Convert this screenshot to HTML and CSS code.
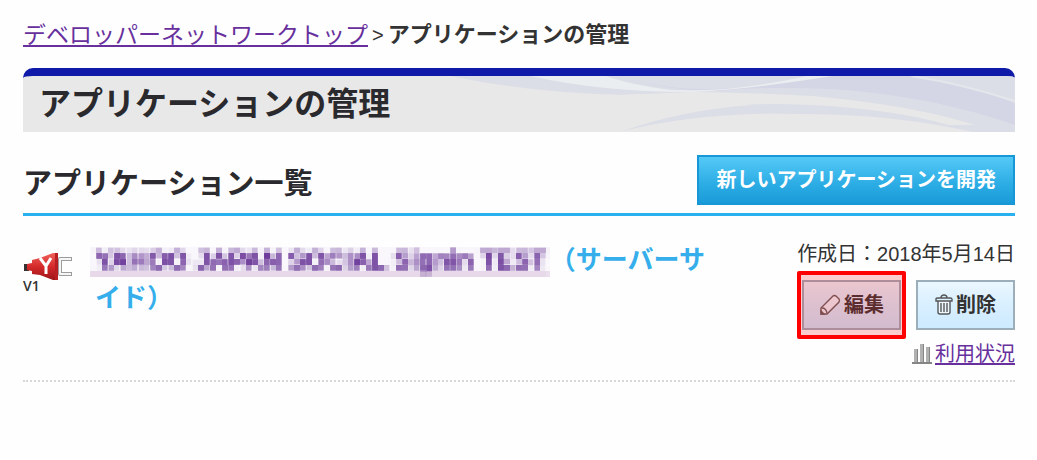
FILE: index.html
```html
<!DOCTYPE html>
<html lang="ja">
<head>
<meta charset="utf-8">
<meta name="viewport" content="width=device-width, initial-scale=1">
<title>アプリケーションの管理</title>
<link rel="stylesheet" href="styles.css">
</head>
<body>
<svg class="filters" aria-hidden="true">
  <filter id="mosaic" x="0" y="0" width="100%" height="100%" color-interpolation-filters="sRGB">
    <feGaussianBlur in="SourceGraphic" stdDeviation="1.4" result="soft"/>
    <feFlood x="2" y="2" width="2" height="2" flood-color="#000"/>
    <feComposite x="0" y="0" width="6" height="6"/>
    <feTile result="grid"/>
    <feComposite in="soft" in2="grid" operator="in"/>
    <feMorphology operator="dilate" radius="2"/>
  </filter>
</svg>
<nav class="breadcrumb" aria-label="パンくずリスト">
  <a href="#">デベロッパーネットワークトップ</a>
  <span class="separator">&gt;</span>
  <strong>アプリケーションの管理</strong>
</nav>
<main>
  <header class="banner">
    <svg class="waves" viewBox="0 0 632 56" preserveAspectRatio="none" aria-hidden="true">
      <path fill="#dcdee7" d="M70 0H632V56H590Q510 38 420 38Q320 35 239 56Q300 34 370 29Q300 15 240 19Q150 17 70 0Z"/>
      <path fill="#e8e8e8" d="M240 19L310 16Q380 17 430 20Q530 29 592 49H566Q500 30 400 28Q310 27 239 56H180V19Z"/>
      <path fill="#e8e8e8" d="M239 56Q310 38 390 39Q440 41 483 56Z"/>
      <path fill="#d5d6e5" d="M235 0Q290 18 370 11Q410 5 430 0H530Q590 11 632 27V49Q550 20 450 13Q380 10 340 15Q275 14 235 0Z"/>
      <path fill="#ebeef0" d="M150 0Q220 16 310 16Q370 13 450 0H425Q350 17 290 14Q250 9 225 0Z"/>
      <path fill="none" stroke="#e3e7eb" stroke-width="2" d="M529 0Q580 8 632 25"/>
    </svg>
    <h1>アプリケーションの管理</h1>
  </header>
  <section>
    <div class="section-head">
      <h2>アプリケーション一覧</h2>
      <button class="create" type="button">新しいアプリケーションを開発</button>
    </div>
    <article class="app">
      <div class="app-icon">
        <svg width="50" height="30" viewBox="0 0 50 30" aria-hidden="true">
          <defs><linearGradient id="plug" x2="0" y2="1"><stop stop-color="#ef625c"/><stop offset=".5" stop-color="#d52a2b"/><stop offset="1" stop-color="#9d1519"/></linearGradient></defs>
          <path fill="none" stroke="#9c9c9c" stroke-width="4" stroke-linejoin="round" d="M49 7H37V22H49"/>
          <path fill="none" stroke="#f5f5f5" stroke-width="2" stroke-linejoin="round" d="M48 7H37V22H48"/>
          <path fill="#363232" d="M1 12H6V19H1Z"/>
          <path fill="url(#plug)" d="M4 12L9 11V8L17 6L30 1H35V28H30L17 23L9 22V19L4 18Z"/>
          <path fill="#b71f23" d="M32 1H35V28H32Z"/>
          <path fill="none" stroke="#fff" stroke-width="3" d="M17 6L23 14V22M28 6L23 14"/>
        </svg>
        <span>V1</span>
      </div>
      <h3><a class="app-name" href="#">YAHOO JAPAN SOCIAL Signin TEST</a>（サーバーサイド）</h3>
      <div class="app-tools">
        <p>作成日：2018年5月14日</p>
        <div class="buttons">
          <button class="tool edit" type="button">
            <svg width="22" height="22" viewBox="0 0 22 22" fill="none" stroke="#635d5d" stroke-width="1.4" aria-hidden="true"><path fill="#fff" fill-opacity=".5" d="M2 14L14 2Q15 1 17 2L20 5Q21 6 20 8L8 20L2 20Z"/><path d="M3 14Q7 14 8 19"/><path fill="#635d5d" d="M2 17L5 20H2Z"/></svg>編集
          </button>
          <button class="tool" type="button">
            <svg width="18" height="22" viewBox="0 0 18 22" fill="none" stroke="#56585a" stroke-width="1.4" aria-hidden="true"><path fill="#fff" fill-opacity=".6" d="M3 7V18Q3 20 5 20H13Q15 20 15 18V7"/><path d="M1 7V5Q1 4 3 4H15Q17 4 17 5V7ZM6 4Q6 1 9 1Q12 1 12 4M6 9V18M9 9V18M12 9V18"/></svg>削除
          </button>
        </div>
        <div class="usage">
          <svg width="20" height="22" viewBox="0 0 20 22" aria-hidden="true"><path fill="#b1b1b1" d="M2 6H6V20H2ZM8 1H12V20H8ZM14 4H18V20H14Z"/><path fill="#858585" d="M5 6H6V20H5ZM11 1H12V20H11ZM17 4H18V20H17ZM0 19H20V21H0Z"/></svg>
          <a href="#">利用状況</a>
        </div>
      </div>
    </article>
  </section>
</main>
</body>
</html>
```
FILE: styles.css
```css
* { box-sizing: border-box; }
body {
  margin: 0;
  padding: 16px 22px 0 23px;
  background: #fefefe;
  color: #333;
  font: 20px/26px "Liberation Sans", "Noto Sans CJK JP", sans-serif;
}
h1, h2, h3, p { margin: 0; }
a { color: #67309d; text-decoration-skip-ink: none; text-underline-offset: 2px; }
button { font: inherit; font-weight: bold; }
.filters { position: absolute; width: 0; height: 0; }
.breadcrumb { display: flex; gap: 4px; margin-bottom: 14px; font-size: 23px; line-height: 38px; white-space: nowrap; }
.breadcrumb strong { font-size: 22px; }
.separator { font-size: 20px; }
.banner {
  position: relative;
  overflow: hidden;
  padding-left: 16px;
  border-top: 8px solid #101aa8;
  border-radius: 10px 10px 0 0;
  background: #e8e8e8;
}
.banner h1 { position: relative; font-size: 32px; line-height: 56px; color: #2a2a2e; }
.waves { position: absolute; top: 0; right: 0; width: 64%; height: 100%; }
.section-head {
  display: flex;
  justify-content: space-between;
  align-items: center;
  margin-top: 23px;
  padding-bottom: 8px;
  border-bottom: 3px solid #29b1ef;
}
.section-head h2 { font-size: 29px; line-height: 40px; padding-top: 8px; color: #2a2a2e; }
.create {
  height: 50px;
  padding: 0 17px;
  border: 2px solid #1797d6;
  background: linear-gradient(#54c9f7, #2cace4 60%, #1a9bd9);
  color: #fff;
  white-space: nowrap;
}
.app {
  display: grid;
  grid-template-columns: 50px minmax(0, 620px) auto;
  column-gap: 22px;
  padding: 25px 0 13px;
  border-bottom: 2px dotted #d8d8d8;
}
.app-icon { padding-top: 11px; font: 600 14px/14px "Open Sans", sans-serif; }
.app-icon svg, .app-icon span { display: block; }
.app-icon svg { margin-bottom: -3px; }
.app h3 { color: #35aeeb; font-size: 26px; line-height: 38px; }
.app-name {
  display: inline-block;
  height: 30px;
  margin-left: -5px;
  padding: 0 3px 0 5px;
  line-height: 26px;
  vertical-align: middle;
  color: #5d268f;
  background: linear-gradient(rgba(150, 110, 190, .05) 24px, #e6d8e8 24px);
  filter: url(#mosaic);
  text-decoration: none;
  white-space: nowrap;
}
.app-tools { display: flex; flex-direction: column; align-items: flex-end; margin-left: auto; white-space: nowrap; }
.buttons { display: flex; gap: 15px; margin: 13px 0 11px; }
.tool {
  position: relative;
  display: flex;
  align-items: center;
  justify-content: center;
  gap: 3px;
  height: 50px;
  min-width: 99px;
  padding: 0 14px;
  border: 2px solid #9baeba;
  background: linear-gradient(#ebf7ff, #d8efff 50%, #cdeaff);
  color: #333;
}
.edit::after {
  content: "";
  position: absolute;
  inset: -11px -7px;
  border: 4px solid #f00;
  border-radius: 2px;
  background: rgba(237, 28, 36, .22);
}
.usage { display: flex; align-items: center; gap: 3px; }
```
